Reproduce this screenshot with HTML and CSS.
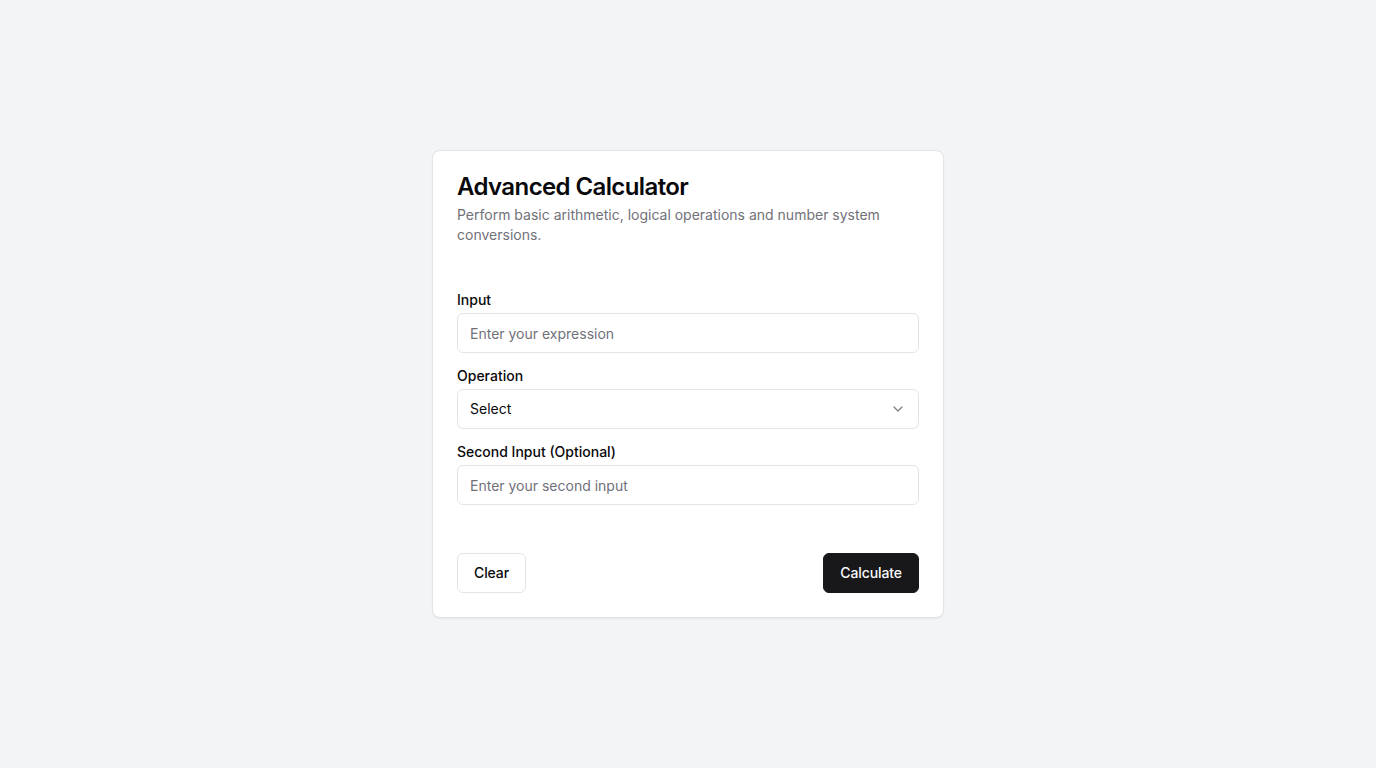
FILE: index.html
```html
<!DOCTYPE html>
<html lang="en">
<head>
<meta charset="utf-8">
<title>Advanced Calculator</title>
<link rel="stylesheet" href="styles.css">
</head>
<body>
<main class="page">
  <section class="card">
    <header class="card-header">
      <h1 class="card-title">Advanced Calculator</h1>
      <p class="card-desc">Perform basic arithmetic, logical operations and number system conversions.</p>
    </header>
    <form class="card-content">
      <div class="field">
        <label class="label" for="input1">Input</label>
        <input class="input" id="input1" type="text" placeholder="Enter your expression">
      </div>
      <div class="field">
        <label class="label">Operation</label>
        <button type="button" class="select">
          <span>Select</span>
          <svg class="chev" width="16" height="16" viewBox="0 0 24 24" fill="none" stroke="currentColor" stroke-width="2" stroke-linecap="round" stroke-linejoin="round"><path d="m6 9 6 6 6-6"/></svg>
        </button>
      </div>
      <div class="field">
        <label class="label" for="input2">Second Input (Optional)</label>
        <input class="input" id="input2" type="text" placeholder="Enter your second input">
      </div>
    </form>
    <footer class="card-footer">
      <button type="button" class="btn btn-outline">Clear</button>
      <button type="button" class="btn btn-primary">Calculate</button>
    </footer>
  </section>
</main>
</body>
</html>
```

FILE: styles.css
```css
* { box-sizing: border-box; }
html, body { margin: 0; padding: 0; }
body {
  background: #f3f4f6;
  font-family: Inter, "Liberation Sans", sans-serif;
  color: #09090b;
}
.page {
  min-height: 100vh;
  display: flex;
  align-items: center;
  justify-content: center;
}
.card {
  width: 512px;
  background: #ffffff;
  border: 1px solid #e4e4e7;
  border-radius: 8px;
  box-shadow: 0 1px 2px rgba(0,0,0,0.05);
}
.card-header {
  padding: 24px;
  display: flex;
  flex-direction: column;
  gap: 6px;
}
.card-title {
  margin: 0;
  font-size: 24px;
  line-height: 24px;
  font-weight: 600;
  letter-spacing: -0.6px;
  color: #09090b;
}
.card-desc {
  margin: 0;
  font-size: 14px;
  line-height: 20px;
  color: #71717a;
}
.card-content {
  padding: 20px 24px 0;
  display: flex;
  flex-direction: column;
  gap: 12px;
}
.field {
  display: flex;
  flex-direction: column;
  gap: 3px;
}
.label {
  padding-top: 1px;
  font-size: 14px;
  line-height: 20px;
  font-weight: 500;
  color: #09090b;
}
.input, .select {
  height: 40px;
  width: 100%;
  border: 1px solid #e4e4e7;
  border-radius: 6px;
  background: #ffffff;
  padding: 0 12px;
  font-family: inherit;
  font-size: 14px;
  color: #09090b;
  outline: none;
}
.input::placeholder { color: #71717a; }
.select {
  display: flex;
  align-items: center;
  justify-content: space-between;
  text-align: left;
  padding-bottom: 2px;
  cursor: pointer;
}
.chev { color: #09090b; opacity: 0.5; margin-top: 2px; }
.card-footer {
  padding: 48px 24px 24px;
  display: flex;
  justify-content: space-between;
  align-items: center;
}
.btn {
  height: 40px;
  padding: 0 16px 2px;
  border-radius: 6px;
  font-family: inherit;
  font-size: 14px;
  font-weight: 500;
  letter-spacing: -0.1px;
  cursor: pointer;
}
.btn-outline {
  background: #ffffff;
  border: 1px solid #e4e4e7;
  color: #09090b;
}
.btn-primary {
  background: #18181b;
  border: 1px solid #18181b;
  color: #fafafa;
}
```
